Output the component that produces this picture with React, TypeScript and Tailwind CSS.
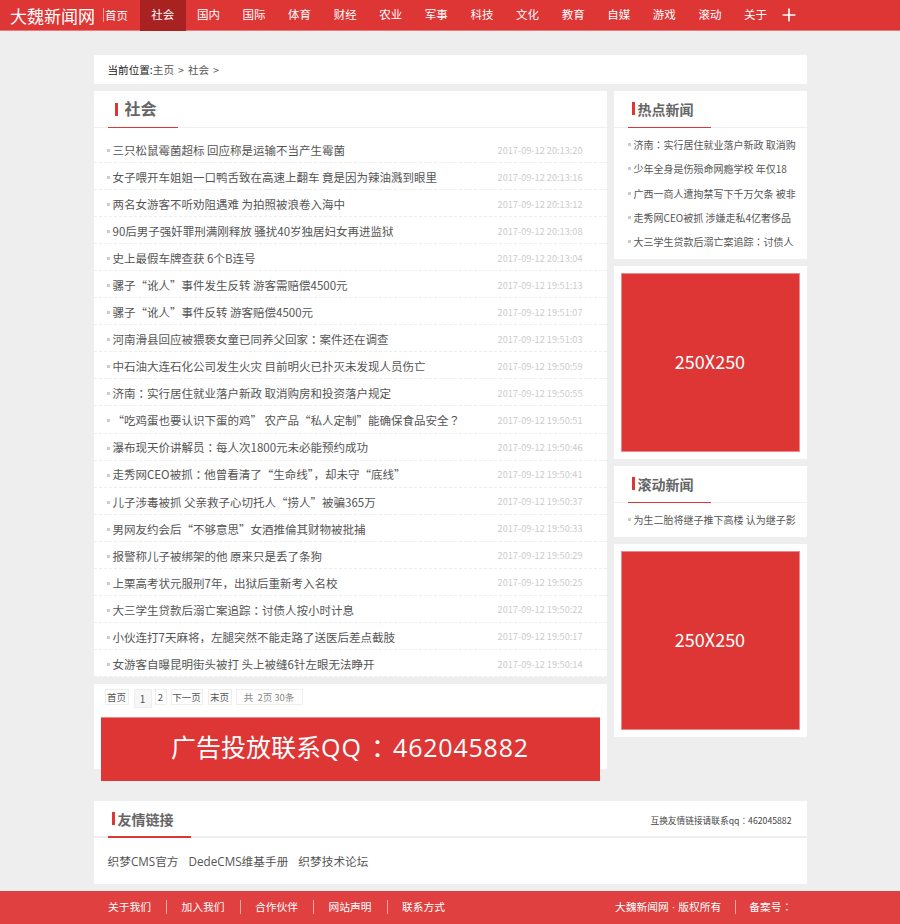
import React from "react";
import { Plus } from "lucide-react";

const navItems = ["社会", "国内", "国际", "体育", "财经", "农业", "军事", "科技", "文化", "教育", "自媒", "游戏", "滚动", "关于"];

const news = [
  ["三只松鼠霉菌超标 回应称是运输不当产生霉菌", "2017-09-12 20:13:20"],
  ["女子喂开车姐姐一口鸭舌致在高速上翻车 竟是因为辣油溅到眼里", "2017-09-12 20:13:16"],
  ["两名女游客不听劝阻遇难 为拍照被浪卷入海中", "2017-09-12 20:13:12"],
  ["90后男子强奸罪刑满刚释放 骚扰40岁独居妇女再进监狱", "2017-09-12 20:13:08"],
  ["史上最假车牌查获 6个B连号", "2017-09-12 20:13:04"],
  ["骡子“讹人”事件发生反转 游客需赔偿4500元", "2017-09-12 19:51:13"],
  ["骡子“讹人”事件反转 游客赔偿4500元", "2017-09-12 19:51:07"],
  ["河南滑县回应被猥亵女童已同养父回家：案件还在调查", "2017-09-12 19:51:03"],
  ["中石油大连石化公司发生火灾 目前明火已扑灭未发现人员伤亡", "2017-09-12 19:50:59"],
  ["济南：实行居住就业落户新政 取消购房和投资落户规定", "2017-09-12 19:50:55"],
  ["“吃鸡蛋也要认识下蛋的鸡” 农产品“私人定制”能确保食品安全？", "2017-09-12 19:50:51"],
  ["瀑布现天价讲解员：每人次1800元未必能预约成功", "2017-09-12 19:50:46"],
  ["走秀网CEO被抓：他曾看清了“生命线”，却未守“底线”", "2017-09-12 19:50:41"],
  ["儿子涉毒被抓 父亲救子心切托人“捞人”被骗365万", "2017-09-12 19:50:37"],
  ["男网友约会后“不够意思”女酒推倫其财物被批捕", "2017-09-12 19:50:33"],
  ["报警称儿子被绑架的他 原来只是丢了条狗", "2017-09-12 19:50:29"],
  ["上栗高考状元服刑7年，出狱后重新考入名校", "2017-09-12 19:50:25"],
  ["大三学生贷款后溺亡案追踪：讨债人按小时计息", "2017-09-12 19:50:22"],
  ["小伙连打7天麻将，左腿突然不能走路了送医后差点截肢", "2017-09-12 19:50:17"],
  ["女游客自曝昆明街头被打 头上被缝6针左眼无法睁开", "2017-09-12 19:50:14"],
];

const hot = [
  "济南：实行居住就业落户新政 取消购",
  "少年全身是伤殒命网瘾学校 年仅18",
  "广西一商人遭拘禁写下千万欠条 被非",
  "走秀网CEO被抓 涉嫌走私4亿奢侈品",
  "大三学生贷款后溺亡案追踪：讨债人",
];

const footerLinks = ["关于我们", "加入我们", "合作伙伴", "网站声明", "联系方式"];

// the TC font centres full-width punctuation, like the original page's font
function Punct({ text }: { text: string }) {
  const parts = text.split(/([：？])/);
  return (
    <span className="whitespace-pre">
      {parts.map((p, i) =>
        p === "：" || p === "？" ? (
          <span key={i} className="font-['Noto_Sans_CJK_TC']">
            {p}
          </span>
        ) : (
          p
        )
      )}
    </span>
  );
}

function SideHeader({ title }: { title: string }) {
  return (
    <div className="h-[37px] border-b border-[#eeeeee] pl-[14px]">
      <div className="-mb-px flex h-[37px] w-[83px] items-start border-b border-[#de3535] pl-[4px] pt-[10px]">
        <span className="mt-[1px] h-[13px] w-[3px] bg-[#de3535]" />
        <span className="ml-[3px] text-[14px] leading-[17px] font-bold text-[#666666]">{title}</span>
      </div>
    </div>
  );
}

function SideItem({ text }: { text: string }) {
  return (
    <li className="flex h-[24.3px] items-center whitespace-nowrap text-[10px] text-[#555555]">
      <span className="mr-[3px] h-[3px] w-[3px] bg-[#cccccc]" />
      <Punct text={text} />
    </li>
  );
}

function AdBox() {
  return (
    <div className="bg-white px-[7px] py-[7px]">
      <div className="flex h-[179px] items-center justify-center border border-[#eb8a8a] bg-[#de3535] pb-[2px] text-[18px] text-white">
        250X250
      </div>
    </div>
  );
}

export default function App() {
  return (
    <div
      className="min-h-[924px] bg-[#eeeeee]"
      style={{ fontFamily: '"Noto Sans CJK SC", "Noto Sans", sans-serif' }}
    >
      <header className="flex h-[31px] items-center border-b border-[#eb7a7a] bg-[#de3535] text-white">
        <div className="ml-[10px] w-[86px] text-[17px] leading-[31px] whitespace-nowrap">大魏新闻网</div>
        <div className="ml-[7px] h-[14px] border-l border-[#f0a0a0]" />
        <a className="w-[36px] pl-[1px] text-[11.5px] leading-[31px]">首页</a>
        {navItems.map((item, i) => (
          <a
            key={item}
            className={`flex h-[31px] w-[45.6px] items-center justify-center text-[11.5px] ${i === 0 ? "bg-[#a82222]" : ""}`}
          >
            {item}
          </a>
        ))}
        <Plus className="ml-[1px] h-[20px] w-[20px]" strokeWidth={2} />
      </header>

      <main className="mx-auto w-[713px] pt-[24px]">
        <div className="flex h-[29px] items-center bg-white pl-[14px] text-[10.6px] text-[#555555]">
          <span className="text-[#222222]">当前位置:</span>
          <span>主页</span>
          <span className="mx-[4px]">&gt;</span>
          <span>社会</span>
          <span className="ml-[4px]">&gt;</span>
        </div>

        <div className="mt-[7px] flex items-start justify-between">
          <div className="w-[513px]">
            <section className="bg-white">
              <div className="h-[37px] border-b border-[#eeeeee] pl-[14px]">
                <div className="-mb-px flex h-[37px] w-[70px] items-start border-b border-[#de3535] pl-[7px] pt-[8px]">
                  <span className="mt-[4px] h-[13px] w-[3px] bg-[#de3535]" />
                  <span className="ml-[7px] text-[16px] leading-[19px] font-bold text-[#666666]">社会</span>
                </div>
              </div>
              <ul className="pt-[8px]">
                {news.map(([title, date]) => (
                  <li
                    key={title}
                    className="flex h-[27.05px] items-center justify-between border-b border-dashed border-[#eeeeee] pt-[3px] pr-[24px] pl-[13px]"
                  >
                    <span className="flex items-center whitespace-nowrap text-[11.5px] text-[#555555]">
                      <span className="mr-[3px] h-[3px] w-[3px] bg-[#cccccc]" />
                      <Punct text={title} />
                    </span>
                    <span className="text-[9.2px] text-[#cccccc]">{date}</span>
                  </li>
                ))}
              </ul>
            </section>

            <section className="mt-[7px] h-[85px] bg-white pt-[5px]">
              <div className="flex items-start pl-[11px] text-[9.5px] text-[#555555]">
                <a className="flex h-[16px] w-[24px] items-center justify-center border border-[#eeeeee]">首页</a>
                <a className="ml-[5px] flex h-[19px] w-[18px] items-center justify-center border border-[#eeeeee] bg-[#f7f7f7] text-[10px]">1</a>
                <a className="ml-[3px] flex h-[16px] w-[12px] items-center justify-center border border-[#eeeeee]">2</a>
                <a className="ml-[4px] flex h-[16px] w-[32px] items-center justify-center border border-[#eeeeee]">下一页</a>
                <a className="ml-[5px] flex h-[16px] w-[24px] items-center justify-center border border-[#eeeeee]">末页</a>
                <span className="ml-[4px] flex h-[16px] w-[67px] items-center justify-center border border-[#eeeeee] whitespace-pre text-[#888888]">共  2页 30条</span>
              </div>
              <div className="mx-[7px] mt-[9px] flex h-[64px] w-[499px] items-center justify-center border-t border-[#eb8a8a] bg-[#de3535] pb-[3px] font-['Open_Sans','Noto_Sans_CJK_SC',sans-serif] text-[25px] text-white">
                广告投放联系<span className="tracking-[1px]">QQ</span>
                <span className="mx-[3px] font-['Noto_Sans_CJK_TC']">：</span>
                <span className="tracking-[0.8px]">462045882</span>
              </div>
            </section>
          </div>

          <aside className="w-[193px]">
            <section className="h-[168px] bg-white">
              <SideHeader title="热点新闻" />
              <ul className="pt-[4.5px] pl-[14px]">
                {hot.map((t) => (
                  <SideItem key={t} text={t} />
                ))}
              </ul>
            </section>
            <div className="mt-[7px]">
              <AdBox />
            </div>
            <section className="mt-[7px] h-[71px] bg-white">
              <SideHeader title="滚动新闻" />
              <ul className="pt-[4px] pl-[14px]">
                <SideItem text="为生二胎将继子推下高楼 认为继子影" />
              </ul>
            </section>
            <div className="mt-[7px]">
              <AdBox />
            </div>
          </aside>
        </div>

        <section className="mt-[32px] h-[83px] bg-white">
          <div className="flex h-[37px] justify-between border-b-2 border-[#eeeeee] pr-[15px] pl-[14px]">
            <div className="-mb-[2px] flex h-[37px] w-[83px] items-start border-b-2 border-[#de3535] pl-[4px] pt-[10px]">
              <span className="mt-[1px] h-[13px] w-[3px] bg-[#de3535]" />
              <span className="ml-[3px] text-[14px] leading-[17px] font-bold text-[#666666]">友情链接</span>
            </div>
            <span className="self-center pt-[4px] text-[8.7px] text-[#444444]">
              <Punct text="互换友情链接请联系qq：462045882" />
            </span>
          </div>
          <div className="flex gap-[10px] pt-[15px] pl-[14px] font-['Open_Sans','Noto_Sans_CJK_SC',sans-serif] text-[11.7px] text-[#555555]">
            <a>织梦CMS官方</a>
            <a>DedeCMS维基手册</a>
            <a>织梦技术论坛</a>
          </div>
        </section>
      </main>

      <footer className="mt-[7px] flex h-[33px] items-center bg-[#e04040] text-[10.75px] text-white">
        <div className="ml-[108px] flex w-[507px] items-center">
          {footerLinks.map((l, i) => (
            <React.Fragment key={l}>
              <a className="w-[43px] whitespace-nowrap">{l}</a>
              {i < footerLinks.length - 1 && <span className="mr-[14.5px] ml-[15px] h-[14px] border-l border-[#f0a8a8]" />}
            </React.Fragment>
          ))}
        </div>
        <span className="whitespace-pre">
          大魏新闻网<span className="font-['Liberation_Sans']"> · </span>版权所有
        </span>
        <span className="mr-[13px] ml-[14px] h-[14px] border-l border-[#f0a8a8]" />
        <span><Punct text="备案号：" /></span>
      </footer>
    </div>
  );
}
